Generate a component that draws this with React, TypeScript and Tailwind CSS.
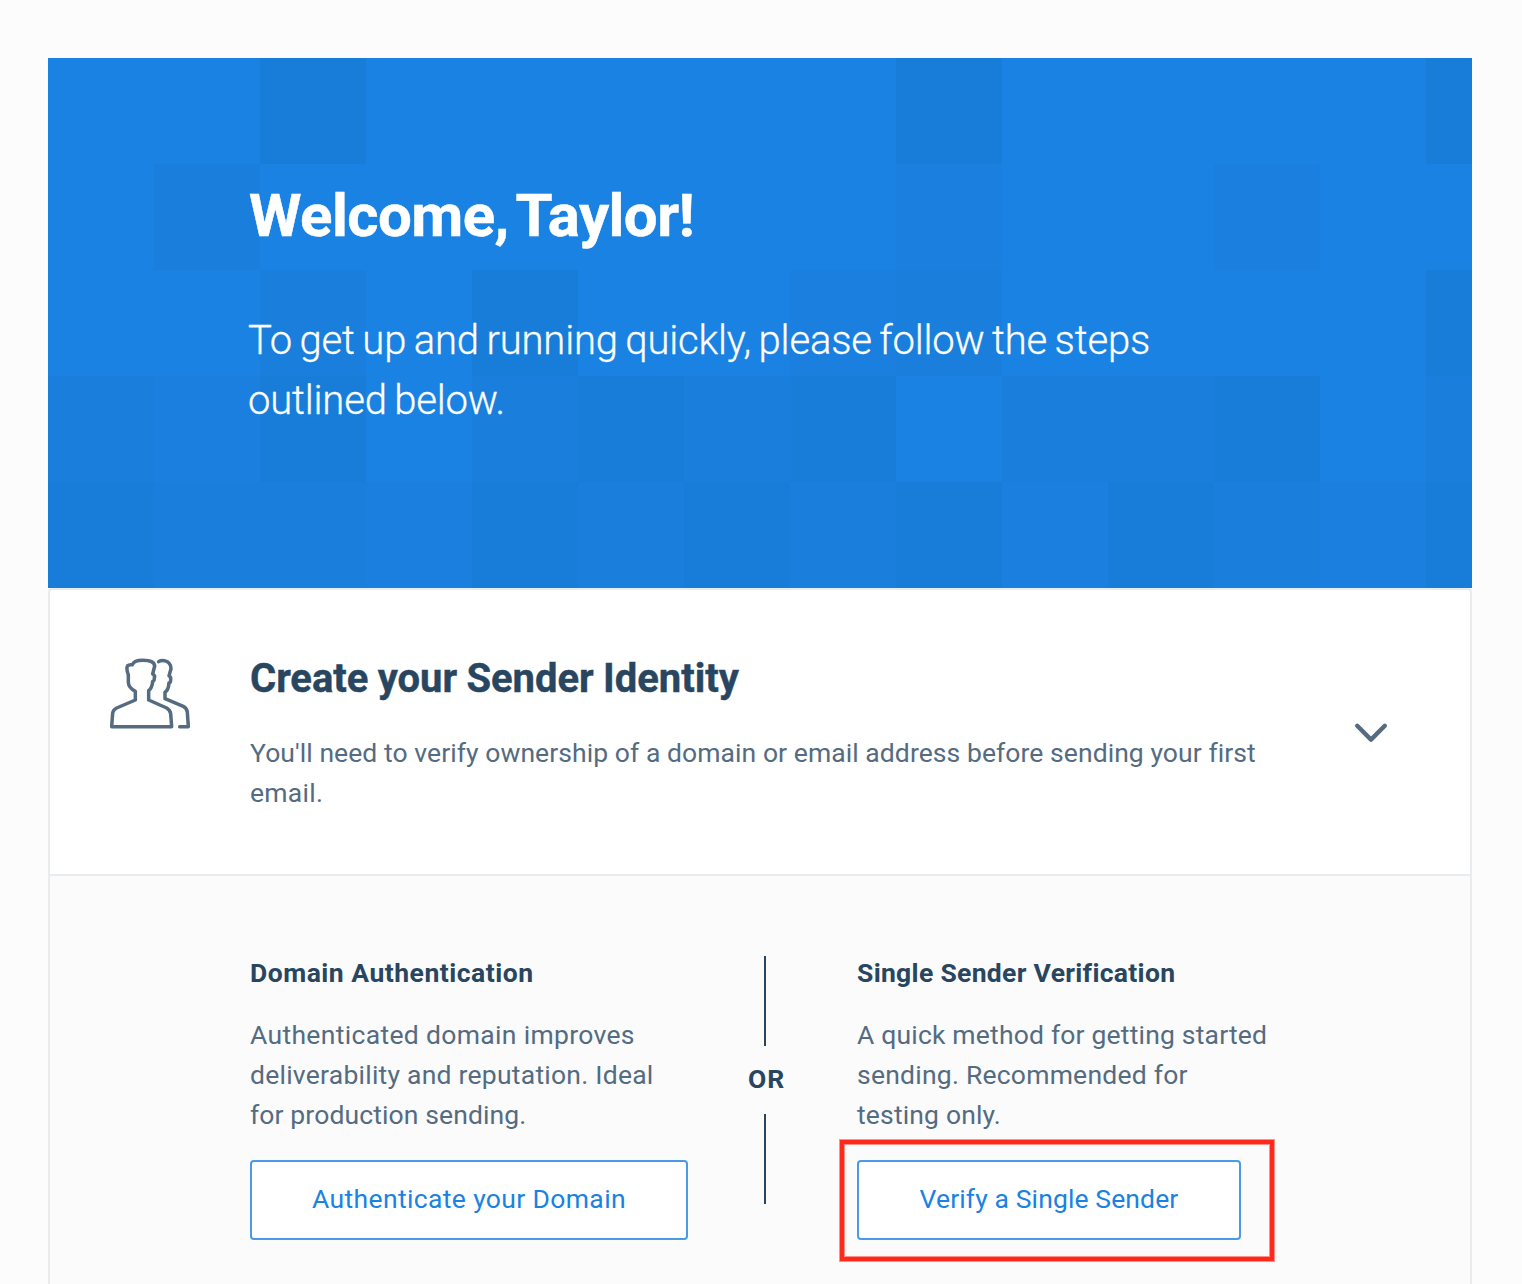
const SHADES = [
  "bg-[#1a82e2]",
  "bg-[#1a7fdf]",
  "bg-[#197edc]",
  "bg-[#187dd9]",
];

const MOSAIC = [
  [0, 0, 3, 0, 0, 0, 0, 0, 3, 0, 0, 0, 0, 3],
  [0, 2, 0, 0, 0, 0, 0, 0, 1, 0, 0, 1, 0, 0],
  [0, 0, 2, 0, 3, 0, 0, 1, 2, 0, 0, 0, 0, 3],
  [2, 1, 3, 0, 2, 3, 2, 3, 0, 2, 2, 3, 0, 2],
  [3, 2, 2, 1, 3, 2, 3, 2, 3, 1, 3, 2, 1, 3],
];

function Mosaic() {
  return (
    <div className="col-start-1 row-start-1 grid grid-cols-[repeat(14,106px)] grid-rows-[repeat(5,106px)] overflow-hidden">
      {MOSAIC.flatMap((row, r) =>
        row.map((shade, c) => <div key={`${r}-${c}`} className={SHADES[shade]} />),
      )}
    </div>
  );
}

function PeopleIcon() {
  return (
    <svg
      className="mt-[66px] ml-[58px] h-[74px] w-[84px] shrink-0"
      viewBox="54 48 252 222"
      fill="none"
      stroke="#546b81"
      strokeWidth="10.5"
      strokeLinejoin="round"
      strokeLinecap="round"
    >
      <path d="M65 260L68 219Q70 209 80 204L136 180V154C124 148 116 138 115 128L115 104C111 94 110 82 113 77C117 74 122 75 127 74C131 65 142 61 158 61C178 61 193 66 194 78L188 102C194 105 195 109 193 114C193 119 192 123 188 124C187 136 184 146 176 152V180L230 204C238 209 241 214 242 221L245 260Z" />
      <path d="M206 65C212 61 218 61 223 62C236 65 243 74 243 86L237 107C242 110 243 114 242 119C242 124 241 128 237 129C236 142 233 152 225 157V176L280 199C288 203 291 209 292 217L295 260H269" />
    </svg>
  );
}

function Chevron() {
  return (
    <svg
      className="mt-[130px] ml-auto mr-[81px] h-6 w-9 shrink-0"
      viewBox="0 0 36 24"
      fill="none"
      stroke="#546b81"
      strokeWidth="4.4"
      strokeLinecap="round"
      strokeLinejoin="round"
    >
      <path d="M4.2 5.8L18 19.6L31.8 5.8" />
    </svg>
  );
}

export default function App() {
  return (
    <div className="h-[1284px] overflow-hidden bg-[#fcfcfc] px-12 pt-[58px] font-['Roboto',sans-serif] text-[26.5px] leading-10 text-[#546b81]">
      <main className="w-[1424px]">
        <header className="grid h-[530px] w-full grid-cols-1 overflow-hidden">
          <Mosaic />
          <div className="z-10 col-start-1 row-start-1 pt-[118px] pl-[200px] text-white">
            <h1 className="ml-px text-[60px] leading-[80px] font-bold tracking-[-0.55px] [-webkit-text-stroke:0.5px_white] [word-spacing:-6px]">
              Welcome, Taylor!
            </h1>
            <p className="mt-[55px] text-[40px] leading-[60px] font-light tracking-[-0.18px] whitespace-nowrap [-webkit-text-stroke:0.3px_white] [word-spacing:-2px]">
              To get up and running quickly, please follow the steps
              <br />
              outlined below.
            </p>
          </div>
        </header>

        <section className="h-[740px] rounded-t border-2 border-[#e9ecef] bg-[#fbfbfb]">
          <div className="flex h-[286px] rounded-t-sm border-b-2 border-[#e9ecef] bg-white">
            <PeopleIcon />
            <div className="ml-[58px] pt-[59px] whitespace-nowrap">
              <h2 className="text-[40px] leading-[60px] font-bold tracking-[-0.04px] text-[#294661] [-webkit-text-stroke:0.4px_#294661] [word-spacing:-0.5px]">
                Create your Sender Identity
              </h2>
              <p className="mt-[24px] tracking-[0.07px]">
                You'll need to verify ownership of a domain or email address before sending your first
                <br />
                <span className="tracking-[0.26px]">email.</span>
              </p>
            </div>
            <Chevron />
          </div>

          <div className="flex pt-[77px] pl-[200px] whitespace-nowrap">
            <div className="w-[438px]">
              <h3 className="font-bold tracking-[0.5px] text-[#294661]">Domain Authentication</h3>
              <p className="mt-[22px]">
                <span className="tracking-[0.33px]">Authenticated domain improves</span>
                <br />
                <span className="tracking-[0.24px]">deliverability and reputation. Ideal</span>
                <br />
                <span className="tracking-[0.12px]">for production sending.</span>
              </p>
              <button className="mt-[25px] h-20 w-full rounded border-2 border-[#4a9ae8] bg-white pb-0.5 tracking-[0.36px] text-[#1a82e2]">
                Authenticate your Domain
              </button>
            </div>

            <div className="mt-[3px] ml-[56px] flex w-11 flex-col items-center text-[#294661]">
              <div className="mr-0.5 h-[90px] w-0.5 bg-[#294661]" />
              <span className="mt-[13px] mb-[15px] ml-px font-bold tracking-[0.8px]">OR</span>
              <div className="mr-0.5 h-[90px] w-0.5 bg-[#294661]" />
            </div>

            <div className="ml-[69px] w-[410px]">
              <h3 className="font-bold tracking-[0.31px] text-[#294661]">Single Sender Verification</h3>
              <p className="mt-[22px]">
                <span className="tracking-[0.19px]">A quick method for getting started</span>
                <br />
                <span className="tracking-[0.23px]">sending. Recommended for</span>
                <br />
                <span className="tracking-[0.16px]">testing only.</span>
              </p>
              <div className="relative mt-[25px] w-[384px]">
                <button className="h-20 w-full rounded border-2 border-[#4a9ae8] bg-white pb-0.5 tracking-[0.12px] text-[#1a82e2]">
                  Verify a Single Sender
                </button>
                <div className="pointer-events-none absolute -top-5 -left-[17px] h-[121px] w-[434px] border-4 border-[#ff2a1c] shadow-[0_0_0_1px_#ff2a1c80,inset_0_0_0_1px_#ff2a1c80]" />
              </div>
            </div>
          </div>
        </section>
      </main>
    </div>
  );
}
